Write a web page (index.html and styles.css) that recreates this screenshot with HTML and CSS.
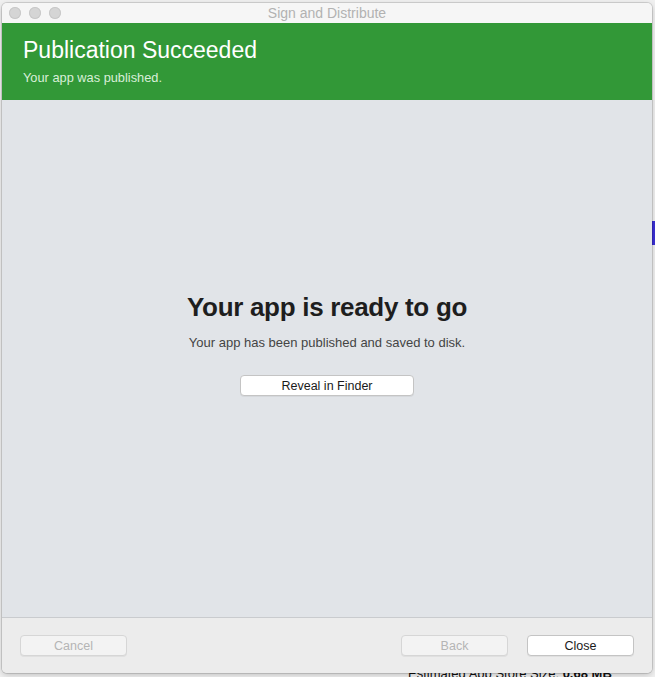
FILE: index.html
```html
<!DOCTYPE html>
<html lang="en">
<head>
    <meta charset="UTF-8">
    <meta name="viewport" content="width=device-width, initial-scale=1.0">
    <title>Sign and Distribute</title>
    <link rel="stylesheet" href="styles.css">
</head>
<body>
<div class="backdrop">
    <div class="back-tab"></div>
    <div class="back-size">Estimated App Store Size: <strong>0.68 MB</strong></div>
</div>

<div class="window">
    <div class="titlebar">
        <div class="lights">
            <span class="light"></span>
            <span class="light"></span>
            <span class="light"></span>
        </div>
        <div class="title">Sign and Distribute</div>
    </div>

    <div class="banner">
        <h1>Publication Succeeded</h1>
        <p>Your app was published.</p>
    </div>

    <div class="content">
        <h2>Your app is ready to go</h2>
        <p>Your app has been published and saved to disk.</p>
        <button class="btn reveal">Reveal in Finder</button>
    </div>

    <div class="footer">
        <button class="btn" disabled>Cancel</button>
        <div class="footer-right">
            <button class="btn" disabled>Back</button>
            <button class="btn">Close</button>
        </div>
    </div>
</div>
</body>
</html>
```

FILE: styles.css
```css
body {
    font-family: "Liberation Sans", Arial, sans-serif;
    background: #e6e6e6;
    margin: 0;
    padding: 0;
    width: 655px;
    height: 677px;
    overflow: hidden;
    position: relative;
}
.backdrop {
    position: absolute;
    left: 0;
    top: 0;
    width: 655px;
    height: 677px;
    background: #f0f0f0;
}
.back-tab {
    position: absolute;
    right: 0;
    top: 221px;
    width: 4px;
    height: 24px;
    background: #3a2fd6;
}
.back-size {
    position: absolute;
    left: 408px;
    top: 667px;
    font-size: 13px;
    line-height: 14px;
    color: #111;
}
.window {
    position: absolute;
    left: 2px;
    top: 3px;
    width: 650px;
    height: 670px;
    display: flex;
    flex-direction: column;
    border-radius: 5px;
    overflow: hidden;
    box-shadow: 0 0 0 1px rgba(0, 0, 0, 0.12), 0 2px 6px rgba(0, 0, 0, 0.2);
}
.titlebar {
    height: 20px;
    background: #f6f6f6;
    display: flex;
    align-items: center;
    position: relative;
}
.lights {
    display: flex;
    gap: 8px;
    padding-left: 7px;
}
.light {
    width: 12px;
    height: 12px;
    border-radius: 50%;
    background: #d5d5d5;
    box-shadow: inset 0 0 0 1px #c8c8c8;
}
.title {
    position: absolute;
    left: 0;
    right: 0;
    top: 2px;
    text-align: center;
    font-size: 14px;
    line-height: 16px;
    color: #b2b2b2;
}
.banner {
    height: 77px;
    background: #329837;
    color: #fff;
    padding: 14px 21px 0;
    box-sizing: border-box;
}
.banner h1 {
    margin: 0;
    font-size: 23px;
    font-weight: normal;
}
.banner p {
    margin: 6px 0 0;
    font-size: 12.8px;
    color: #d9efd9;
}
.content {
    flex: 1;
    background: #e1e4e8;
    display: flex;
    flex-direction: column;
    align-items: center;
    padding-top: 192px;
    box-sizing: border-box;
    border-bottom: 1px solid #c9cbce;
}
.content h2 {
    margin: 0;
    font-size: 26px;
    font-weight: bold;
    color: #1e1e1e;
    letter-spacing: -0.3px;
}
.content p {
    margin: 12px 0 0;
    font-size: 13px;
    color: #444;
}
.btn {
    font-family: "Liberation Sans", Arial, sans-serif;
    font-size: 12.5px;
    color: #1a1a1a;
    background: #fff;
    border: 1px solid #c4c4c4;
    border-radius: 4px;
    height: 21px;
    width: 107px;
    padding: 0;
    box-shadow: 0 1px 0 rgba(0, 0, 0, 0.05);
}
.btn:disabled {
    background: #f3f3f3;
    color: #b5b5b5;
    border-color: #d6d6d6;
}
.reveal {
    width: 174px;
    margin-top: 25px;
}
.footer {
    height: 55px;
    background: #ececec;
    display: flex;
    justify-content: space-between;
    align-items: flex-start;
    padding: 17px 18px 0;
    box-sizing: border-box;
}
.footer-right {
    display: flex;
    gap: 19px;
}
```
